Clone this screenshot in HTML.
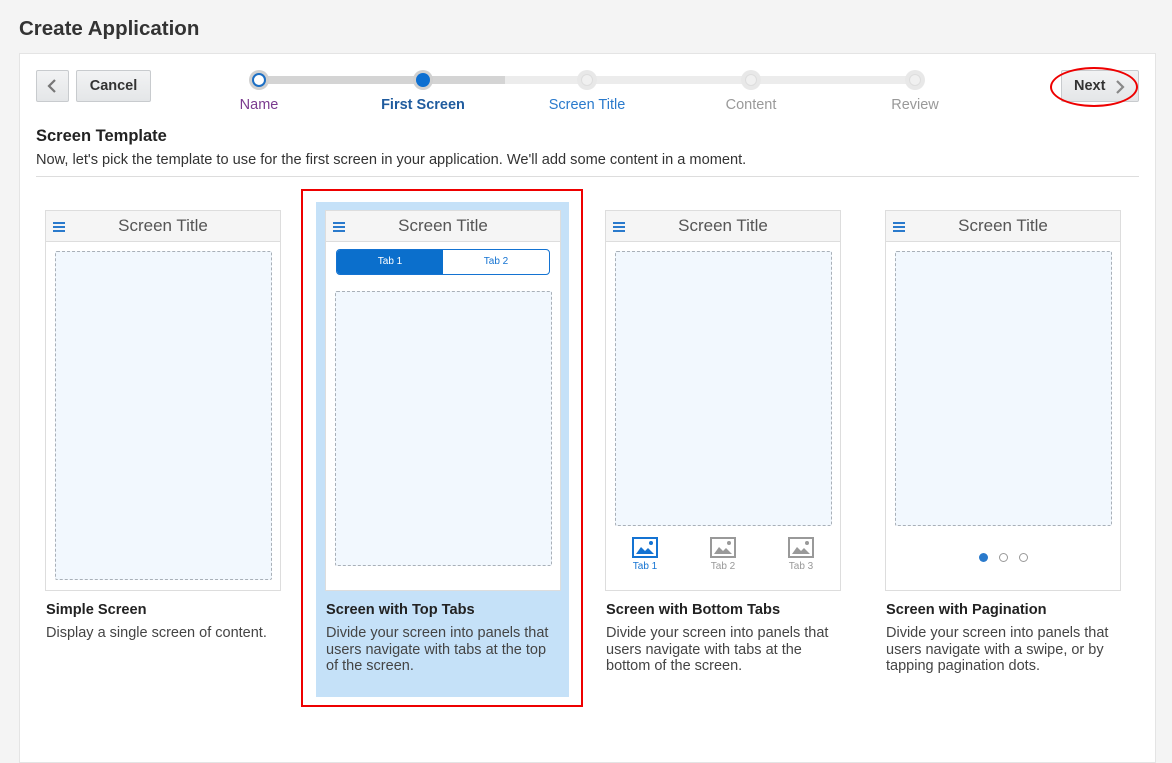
<!DOCTYPE html>
<html><head><meta charset="utf-8"><style>
*{box-sizing:border-box;margin:0;padding:0}
body{width:1172px;height:754px;background:#f4f4f4;font-family:"Liberation Sans",sans-serif;position:relative;overflow:hidden;color:#333}
.a{position:absolute}
h1{position:absolute;left:19px;top:17px;font-size:20.5px;font-weight:bold;color:#333}
.panel{left:19px;top:53px;width:1137px;height:710px;background:#fff;border:1px solid #e4e4e4}
.btn{background:linear-gradient(#f2f3f4,#e4e6e8);border:1px solid #c8cbce;border-radius:2px;font-size:14.5px;font-weight:bold;color:#333;text-align:center;line-height:30px}
.circ{width:20px;height:20px;border-radius:50%;background:#e8e8e8;top:70px}
.circ i{position:absolute;left:4px;top:4px;width:12px;height:12px;border-radius:50%;background:#f0f0f0;border:1px solid #ddd}
.lbl{top:97px;font-size:14.5px;width:120px;text-align:center}
.phone{width:236px;height:381px;background:#fff;border:1px solid #ddd;top:210px}
.bar{height:31px;background:#f5f5f5;border-bottom:1px solid #ddd;text-align:center;font-size:17px;line-height:29px;color:#555;position:relative}
.ham{position:absolute;left:7px;top:11px;width:12px;height:10px;border-top:2px solid #2a7acc;border-bottom:2px solid #2a7acc}
.ham:after{content:"";position:absolute;left:0;top:2px;width:12px;height:2px;background:#2a7acc}
.dash{position:absolute;border:1px dashed #a9b0b8;background:#f2f8fe;border-radius:2px}
.ct{top:602px;font-size:14.6px;font-weight:bold;color:#222}
.cd{top:625px;font-size:14.5px;color:#444;line-height:16.5px;width:232px}
.ic{position:absolute;top:326px}
.tl{position:absolute;top:350px;font-size:10px;color:#999;width:40px;text-align:center}
</style></head><body>
<h1>Create Application</h1>
<div class="a panel"></div>
<div class="a btn" style="left:36px;top:70px;width:33px;height:32px"><svg width="31" height="30" viewBox="0 0 31 30"><path d="M18 9 L12 15 L18 21" fill="none" stroke="#777" stroke-width="2.2"/></svg></div>
<div class="a btn" style="left:76px;top:70px;width:75px;height:32px">Cancel</div>
<div class="a btn" style="left:1061px;top:70px;width:78px;height:32px;text-align:left;padding-left:12px">Next<svg style="position:absolute;left:52px;top:8px" width="12" height="16" viewBox="0 0 12 16"><path d="M3 2 L9 8 L3 14" fill="none" stroke="#888" stroke-width="2.2"/></svg></div>
<div class="a" style="left:1050px;top:67px;width:88px;height:40px;border:2px solid #e00;border-radius:50%"></div>
<div class="a" style="left:259px;top:76px;width:246px;height:8px;background:#d4d4d4"></div>
<div class="a" style="left:505px;top:76px;width:410px;height:8px;background:#ececec"></div>
<div class="a circ" style="left:249px;background:#d0d0d0"><i style="background:#fff;border:2px solid #1d6fc4;left:3px;top:3px;width:14px;height:14px"></i></div>
<div class="a circ" style="left:413px;background:#d0d0d0"><i style="background:#0d6fd1;border:none;left:3px;top:3px;width:14px;height:14px"></i></div>
<div class="a circ" style="left:577px"><i></i></div>
<div class="a circ" style="left:741px"><i></i></div>
<div class="a circ" style="left:905px"><i></i></div>
<div class="a lbl" style="left:199px;color:#7b3b8f">Name</div>
<div class="a lbl" style="left:363px;color:#1f5b9e;font-weight:bold">First Screen</div>
<div class="a lbl" style="left:527px;color:#2a7acc">Screen Title</div>
<div class="a lbl" style="left:691px;color:#999">Content</div>
<div class="a lbl" style="left:855px;color:#999">Review</div>
<div class="a" style="left:36px;top:127px;font-size:16.5px;font-weight:bold;color:#222">Screen Template</div>
<div class="a" style="left:36px;top:152px;font-size:14.6px;color:#333;white-space:nowrap">Now, let's pick the template to use for the first screen in your application. We'll add some content in a moment.</div>
<div class="a" style="left:36px;top:176px;width:1103px;height:1px;background:#ddd"></div>

<div class="a" style="left:301px;top:189px;width:282px;height:518px;border:2px solid #e00"></div>
<div class="a" style="left:316px;top:202px;width:253px;height:495px;background:#c5e1f8"></div>

<div class="a phone" style="left:45px"><div class="bar"><div class="ham"></div>Screen Title</div><div class="dash" style="left:9px;top:40px;width:217px;height:329px"></div></div>
<div class="a phone" style="left:325px"><div class="bar"><div class="ham"></div>Screen Title</div>
<div style="position:absolute;left:10px;top:38px;width:214px;height:26px;border:1px solid #1473d2;border-radius:4px;overflow:hidden;font-size:10px;line-height:24px;text-align:center"><div style="position:absolute;left:0;top:0;width:106px;height:24px;background:#0b6fcc;color:#fff">Tab 1</div><div style="position:absolute;left:106px;top:0;width:106px;height:24px;color:#1473d2">Tab 2</div></div>
<div class="dash" style="left:9px;top:80px;width:217px;height:275px"></div></div>
<div class="a phone" style="left:605px"><div class="bar"><div class="ham"></div>Screen Title</div><div class="dash" style="left:9px;top:40px;width:217px;height:275px"></div>
<svg class="ic" style="left:26px" width="26" height="21" viewBox="0 0 26 21"><rect x="1" y="1" width="24" height="19" fill="#fff" stroke="#1473d2" stroke-width="2"/><path d="M4 17 L9 10 L13 14 L16 11 L22 17Z" fill="#1473d2"/><circle cx="19" cy="6" r="2" fill="#1473d2"/></svg><div class="tl" style="left:19px;color:#1473d2">Tab 1</div>
<svg class="ic" style="left:104px" width="26" height="21" viewBox="0 0 26 21"><rect x="1" y="1" width="24" height="19" fill="#fff" stroke="#999" stroke-width="2"/><path d="M4 17 L9 10 L13 14 L16 11 L22 17Z" fill="#999"/><circle cx="19" cy="6" r="2" fill="#999"/></svg><div class="tl" style="left:97px">Tab 2</div>
<svg class="ic" style="left:182px" width="26" height="21" viewBox="0 0 26 21"><rect x="1" y="1" width="24" height="19" fill="#fff" stroke="#999" stroke-width="2"/><path d="M4 17 L9 10 L13 14 L16 11 L22 17Z" fill="#999"/><circle cx="19" cy="6" r="2" fill="#999"/></svg><div class="tl" style="left:175px">Tab 3</div></div>
<div class="a phone" style="left:885px"><div class="bar"><div class="ham"></div>Screen Title</div><div class="dash" style="left:9px;top:40px;width:217px;height:275px"></div>
<div style="position:absolute;left:93px;top:342px;width:9px;height:9px;border-radius:50%;background:#2a7acc"></div>
<div style="position:absolute;left:113px;top:342px;width:9px;height:9px;border-radius:50%;border:1px solid #999"></div>
<div style="position:absolute;left:133px;top:342px;width:9px;height:9px;border-radius:50%;border:1px solid #999"></div></div>

<div class="a ct" style="left:46px">Simple Screen</div>
<div class="a cd" style="left:46px">Display a single screen of content.</div>
<div class="a ct" style="left:326px">Screen with Top Tabs</div>
<div class="a cd" style="left:326px">Divide your screen into panels that users navigate with tabs at the top of the screen.</div>
<div class="a ct" style="left:606px">Screen with Bottom Tabs</div>
<div class="a cd" style="left:606px">Divide your screen into panels that users navigate with tabs at the bottom of the screen.</div>
<div class="a ct" style="left:886px">Screen with Pagination</div>
<div class="a cd" style="left:886px">Divide your screen into panels that users navigate with a swipe, or by tapping pagination dots.</div>
</body></html>
